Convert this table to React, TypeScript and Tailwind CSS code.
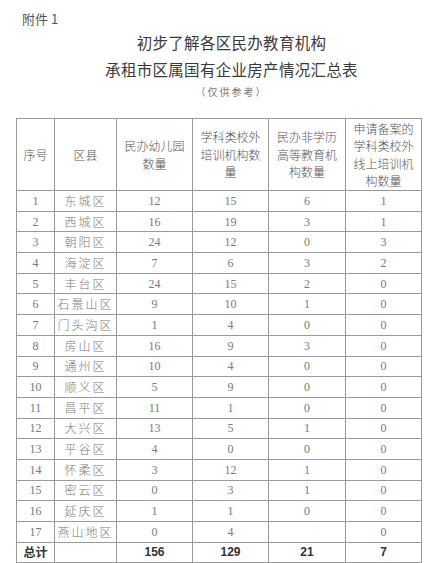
const rows: [string, string, string, string, string, string][] = [
  ['1', '东城区', '12', '15', '6', '1'],
  ['2', '西城区', '16', '19', '3', '1'],
  ['3', '朝阳区', '24', '12', '0', '3'],
  ['4', '海淀区', '7', '6', '3', '2'],
  ['5', '丰台区', '24', '15', '2', '0'],
  ['6', '石景山区', '9', '10', '1', '0'],
  ['7', '门头沟区', '1', '4', '0', '0'],
  ['8', '房山区', '16', '9', '3', '0'],
  ['9', '通州区', '10', '4', '0', '0'],
  ['10', '顺义区', '5', '9', '0', '0'],
  ['11', '昌平区', '11', '1', '0', '0'],
  ['12', '大兴区', '13', '5', '1', '0'],
  ['13', '平谷区', '4', '0', '0', '0'],
  ['14', '怀柔区', '3', '12', '1', '0'],
  ['15', '密云区', '0', '3', '1', '0'],
  ['16', '延庆区', '1', '1', '0', '0'],
  ['17', '燕山地区', '0', '4', '', '0'],
];

const sans = "font-['Noto_Sans_CJK_SC',sans-serif]";
const serif = "font-['Liberation_Serif','Noto_Sans_CJK_SC',serif]";
const cell = 'border border-[#9a9a9a] text-center align-middle p-0';

export default function App() {
  return (
    <div className={`w-[427px] h-[563px] bg-white overflow-hidden ${sans}`}>
      <div className="pl-[22px] pt-[9px] h-[26px] text-[13px] leading-[20px] text-[#555]">附件 1</div>
      <div className="flex flex-col items-center pl-[36px] text-[#3a3a3a]">
        <div className="mt-[4px] text-[15.5px] leading-[24px] tracking-[0.3px]">初步了解各区民办教育机构</div>
        <div className="mt-[3px] text-[15.5px] leading-[24px] tracking-[0.3px]">承租市区属国有企业房产情况汇总表</div>
        <div className="mt-[3px] text-[10px] leading-[16px] tracking-[2px] text-[#777]">（仅供参考）</div>
      </div>
      <table className="ml-[16px] mt-[18px] w-[405px] border-collapse table-fixed">
        <colgroup>
          <col className="w-[38px]" />
          <col className="w-[62px]" />
          <col className="w-[76px]" />
          <col className="w-[76px]" />
          <col className="w-[77px]" />
          <col className="w-[76px]" />
        </colgroup>
        <thead>
          <tr className="h-[72px] text-[12px] leading-[17.5px] text-[#555]">
            <th className={`${cell} font-light`}>序号</th>
            <th className={`${cell} font-light`}>区县</th>
            <th className={`${cell} font-light`}>民办幼儿园<br />数量</th>
            <th className={`${cell} font-light`}>学科类校外<br />培训机构数<br />量</th>
            <th className={`${cell} font-light`}>民办非学历<br />高等教育机<br />构数量</th>
            <th className={`${cell} font-light`}>申请备案的<br />学科类校外<br />线上培训机<br />构数量</th>
          </tr>
        </thead>
        <tbody className="text-[12px] leading-[14px] text-[#7a7a7a]">
          {rows.map((r) => (
            <tr key={r[0]} className="h-[20.7px]">
              <td className={`${cell} ${serif}`}>{r[0]}</td>
              <td className={`${cell} font-light tracking-[2px]`}>{r[1]}</td>
              <td className={`${cell} ${serif}`}>{r[2]}</td>
              <td className={`${cell} ${serif}`}>{r[3]}</td>
              <td className={`${cell} ${serif}`}>{r[4]}</td>
              <td className={`${cell} ${serif}`}>{r[5]}</td>
            </tr>
          ))}
          <tr className="h-[20px] text-[12px] font-bold text-[#333]">
            <td className={cell}>总计</td>
            <td className={cell}></td>
            <td className={`${cell} font-['Liberation_Sans',sans-serif]`}>156</td>
            <td className={`${cell} font-['Liberation_Sans',sans-serif]`}>129</td>
            <td className={`${cell} font-['Liberation_Sans',sans-serif]`}>21</td>
            <td className={`${cell} font-['Liberation_Sans',sans-serif]`}>7</td>
          </tr>
        </tbody>
      </table>
    </div>
  );
}
